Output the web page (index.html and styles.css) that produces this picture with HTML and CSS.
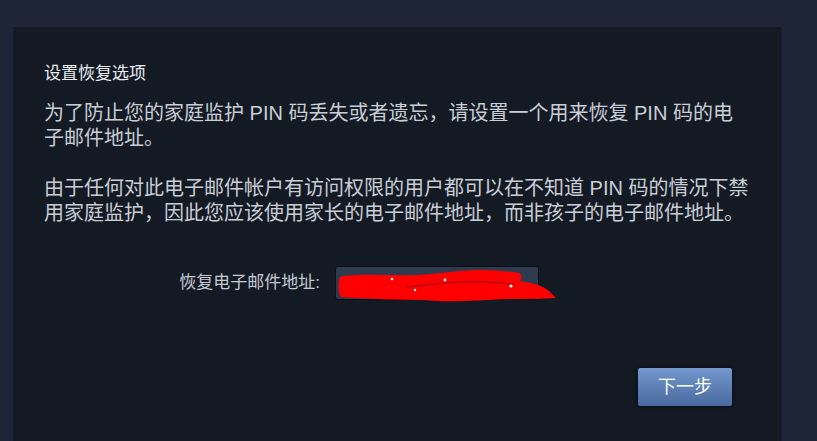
FILE: index.html
```html
<!DOCTYPE html>
<html lang="zh-CN">
<head>
<meta charset="utf-8">
<title>设置恢复选项</title>
<link rel="stylesheet" href="styles.css">
</head>
<body>
<div class="panel">
  <h2 class="title">设置恢复选项</h2>
  <p class="desc">为了防止您的家庭监护 PIN 码丢失或者遗忘，请设置一个用来恢复 PIN 码的电子邮件地址。</p>
  <p class="desc">由于任何对此电子邮件帐户有访问权限的用户都可以在不知道 PIN 码的情况下禁用家庭监护，因此您应该使用家长的电子邮件地址，而非孩子的电子邮件地址。</p>
  <div class="email-row">
    <label class="email-label" for="email">恢复电子邮件地址:</label>
    <div class="input-wrap">
      <input class="email-input" id="email" type="text" value="">
      <svg class="scribble" width="222" height="34" viewBox="0 0 222 34" aria-hidden="true">
        <path d="M3 8 C20 4 50 7 80 6 C100 5 115 2 140 1 C160 1 175 3 182 4 C186 6 184 10 183 12 C195 14 205 16 212 22 L219 29 C205 30 190 30 170 30 C150 31 120 33 100 32 C80 30 60 31 40 30 C25 29 10 29 4 28 C1 24 1 14 3 8 Z" fill="#ff0000"/>
        <path d="M70 18 C95 15 120 12 150 13 C160 13 170 14 178 16" stroke="#c40a14" stroke-width="2" fill="none"/>
        <circle cx="55" cy="10" r="1.3" fill="#f2f2f2"/>
        <circle cx="108" cy="11" r="1.4" fill="#f2f2f2"/>
        <circle cx="78" cy="21" r="1.2" fill="#f2f2f2"/>
        <circle cx="174" cy="17" r="1.6" fill="#f2f2f2"/>
      </svg>
    </div>
  </div>
  <div class="actions">
    <button class="next-btn" type="button">下一步</button>
  </div>
</div>
</body>
</html>
```
FILE: styles.css
```css
html, body {
  margin: 0;
  padding: 0;
}
body {
  background: #1e2537;
  height: 441px;
  overflow: hidden;
  font-family: "Liberation Sans", "Noto Sans CJK SC", sans-serif;
}
.panel {
  margin: 26px 35px 0 13px;
  background: #141a24;
  border-top: 1px solid #1f2634;
  border-left: 1px solid #181f2b;
  border-right: 1px solid #181f2b;
  min-height: 420px;
  padding: 35px 30px 0 30px;
  box-sizing: border-box;
}
.title {
  margin: 0;
  font-size: 17px;
  line-height: 24px;
  font-weight: normal;
  color: #e9ecf1;
}
.desc {
  margin: 15px 0 0 0;
  font-size: 20px;
  line-height: 25px;
  color: #c9ced6;
}
.desc + .desc {
  margin-top: 25px;
}
.email-row {
  display: flex;
  align-items: center;
  gap: 15px;
  margin-top: 40px;
  padding-left: 129px;
}
.email-label {
  font-size: 17px;
  line-height: 24px;
  color: #c5cbd4;
  width: 147px;
  text-align: right;
}
.input-wrap {
  position: relative;
  width: 204px;
  height: 34px;
}
.email-input {
  box-sizing: border-box;
  width: 204px;
  height: 34px;
  margin: 0;
  background: #2f3a4f;
  border: 1px solid #0c1017;
  border-radius: 3px;
  color: #ffffff;
  font-size: 14px;
  padding: 0 8px;
  outline: none;
}
.scribble {
  position: absolute;
  left: 2px;
  top: 3px;
}
.actions {
  display: flex;
  justify-content: flex-end;
  margin-top: 67px;
  padding-right: 18px;
}
.next-btn {
  width: 96px;
  height: 40px;
  border: 1px solid #0d1119;
  border-radius: 3px;
  background: linear-gradient(to bottom, #7398cd 0%, #5e80b6 50%, #4a6a9e 100%);
  color: #ffffff;
  font-family: "Liberation Sans", "Noto Sans CJK SC", sans-serif;
  font-size: 18px;
  line-height: 38px;
  padding: 0;
  box-shadow: 0 0 4px rgba(0, 0, 0, 0.6);
}
```
